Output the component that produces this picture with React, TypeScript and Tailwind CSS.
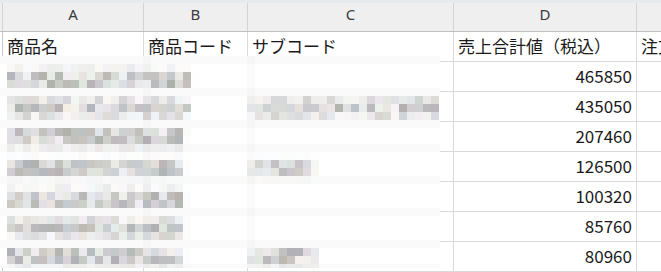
import React from 'react';

const cols = [
  { key: 'A', w: 'w-[141px]' },
  { key: 'B', w: 'w-[104px]' },
  { key: 'C', w: 'w-[206px]' },
  { key: 'D', w: 'w-[183px]' },
];

const sales = ['465850', '435050', '207460', '126500', '100320', '85760', '80960'];

// blurred text areas per data row: [x0, x1]
const hidden: number[][][] = [
  [[7, 192]],
  [[7, 190], [250, 440]],
  [[7, 185]],
  [[7, 185], [250, 315]],
  [[7, 185]],
  [[7, 185]],
  [[7, 185], [250, 318]],
];

function rng(seed: number) {
  let t = seed;
  return () => {
    t = (t + 0x6d2b79f5) | 0;
    let r = Math.imul(t ^ (t >>> 15), 1 | t);
    r = (r + Math.imul(r ^ (r >>> 7), 61 | r)) ^ r;
    return ((r ^ (r >>> 14)) >>> 0) / 4294967296;
  };
}

const overlap = (a0: number, a1: number, b0: number, b1: number) =>
  Math.max(0, Math.min(a1, b1) - Math.max(a0, b0));

function buildMosaic() {
  const rand = rng(11);
  const top = 56;
  const left = -1;
  const cells: string[] = [];
  for (let r = 0; r < 27; r++) {
    const y0 = top + r * 8;
    const y1 = y0 + 8;
    for (let c = 0; c < 56; c++) {
      const x0 = left + c * 8;
      const x1 = x0 + 8;
      let ink = 0;
      for (let i = 0; i < 7; i++) {
        const line = 61 + i * 30;
        const cov = overlap(y0, y1, line + 7, line + 27) / 8;
        if (!cov) continue;
        for (const [a, b] of hidden[i]) {
          const cx = overlap(x0, x1, a, b) / 8;
          if (cx) ink = Math.max(ink, cov * cx);
        }
      }
      let base = 255;
      for (let i = 0; i < 8; i++) {
        const line = 61 + i * 30;
        if (line >= y0 && line < y1) base -= 5;
      }
      if ((143 >= x0 && 143 < x1) || (247 >= x0 && 247 < x1)) base -= 4;
      const shade = ink * ink * (0.12 + rand() * 0.6);
      const g = base - shade * 110;
      const tr = (rand() - 0.5) * 12 * ink;
      const tb = (rand() - 0.5) * 14 * ink;
      const cl = (v: number) => Math.round(Math.max(0, Math.min(255, v)));
      cells.push(`rgb(${cl(g + tr)},${cl(g)},${cl(g + tb)})`);
    }
  }
  return cells;
}

const mosaic = buildMosaic();

export default function App() {
  return (
    <div
      className="relative w-[661px] h-[272px] overflow-hidden bg-white text-[#1a1a1a]"
      style={{ fontFamily: '"Noto Sans CJK JP", "Noto Sans", sans-serif' }}
    >
      <div className="h-[3px] bg-[#e6e9ed]" />
      {/* column letters */}
      <div className="flex h-[29px] bg-[#efefef] border-b border-[#bfbfbf]">
        <div className="w-[3px] shrink-0 border-r border-[#d4d4d4]" />
        {cols.map((c) => (
          <div
            key={c.key}
            className={`${c.w} shrink-0 border-r border-[#d4d4d4] flex justify-center pt-[1px] text-[15px] leading-[20px] text-[#3a3a3a] font-['Noto_Sans']`}
          >
            {c.key}
          </div>
        ))}
        <div className="flex-1" />
      </div>
      {/* row 1 */}
      <div className="flex h-[30px] border-b border-[#dadada] text-[17px] leading-[28px]">
        <div className="w-[3px] shrink-0 border-r border-[#c8c8c8]" />
        <div className="w-[141px] shrink-0 border-r border-[#dadada] px-[4px] whitespace-nowrap">商品名</div>
        <div className="w-[104px] shrink-0 border-r border-[#dadada] px-[4px] whitespace-nowrap">商品コード</div>
        <div className="w-[206px] shrink-0 border-r border-[#dadada] px-[4px] whitespace-nowrap">サブコード</div>
        <div className="w-[183px] shrink-0 border-r border-[#dadada] px-[4px] whitespace-nowrap">売上合計値（税込）</div>
        <div className="flex-1 px-[4px] whitespace-nowrap overflow-hidden">注文数</div>
      </div>
      {sales.map((v) => (
        <div key={v} className="flex h-[30px] border-b border-[#dadada] text-[17px] leading-[28px]">
          <div className="w-[3px] shrink-0 border-r border-[#c8c8c8]" />
          <div className="w-[141px] shrink-0 border-r border-[#dadada]" />
          <div className="w-[104px] shrink-0 border-r border-[#dadada]" />
          <div className="w-[206px] shrink-0 border-r border-[#dadada]" />
          <div className="w-[183px] shrink-0 border-r border-[#dadada] pr-[4px] text-right">{v}</div>
          <div className="flex-1" />
        </div>
      ))}
      {/* pixelated privacy overlay */}
      <div className="absolute left-0 top-[56px] w-[440px] h-[212px] overflow-hidden">
        <div className="grid grid-cols-[repeat(56,8px)] -ml-[1px]">
          {mosaic.map((c, i) => (
            <div key={i} className="h-[8px]" style={{ background: c }} />
          ))}
        </div>
      </div>
    </div>
  );
}
